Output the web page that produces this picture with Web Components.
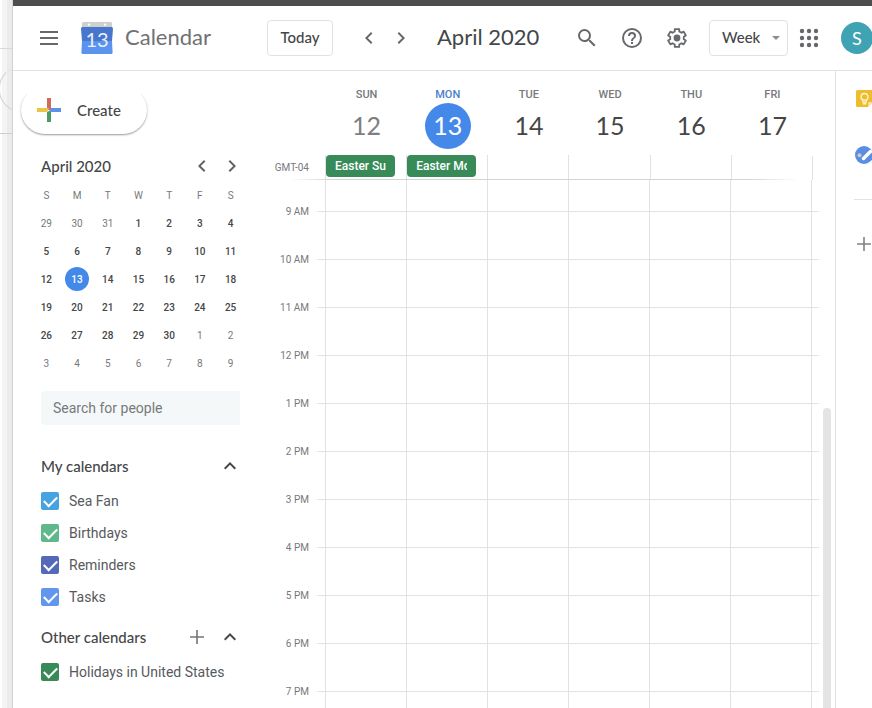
<!DOCTYPE html>
<html lang="en">
<head>
<meta charset="utf-8">
<title>Calendar</title>
<style>
html,body{margin:0;height:100%}
body{overflow:hidden;background:#fff;color:#444648;font-family:Roboto,"Liberation Sans",sans-serif;--display:Lato,"Open Sans",sans-serif;--line:#e2e2e2;--blue:#4489ea}
</style>
</head>
<body>
<calendar-app></calendar-app>
<script>
const base = `
*{box-sizing:border-box}
button{font:inherit;color:inherit;background:none;border:0;padding:0;margin:0;cursor:pointer;display:inline-flex;align-items:center;justify-content:center}
svg{display:block;flex:none}
h1,h2,ul{margin:0;padding:0;font-weight:inherit;font-size:inherit;list-style:none}`;
function define(name, css, html) {
  customElements.define(name, class extends HTMLElement {
    constructor() {
      super();
      this.attachShadow({mode: 'open'}).innerHTML =
        `<style>${base}${css}</style>` + (typeof html === 'function' ? html(this) : html);
    }
  });
}

const gearPoints = [0, 60, 120, 180, 240, 300].flatMap(a => [[-19, 6.9], [-14, 9.2], [14, 9.2], [19, 6.9]].map(([d, r]) => {
  const t = (a + d) * Math.PI / 180;
  return `${(12 + r * Math.sin(t)).toFixed(2)},${(12 - r * Math.cos(t)).toFixed(2)}`;
})).join(' ');
const icons = {
  menu: '<path d="M3 5h18v2H3zM3 11h18v2H3zM3 17h18v2H3z"/>',
  left: '<path d="M15.4 7.4 14 6l-6 6 6 6 1.4-1.4L10.800 12z"/>',
  right: '<path d="M10 6 8.600 7.400 13.200 12l-4.600 4.600L10 18l6-6z"/>',
  up: '<path d="m12 8-6 6 1.400 1.400 4.600-4.600 4.600 4.600L18 14z"/>',
  plus: '<path d="M19 12.800h-6.200V19h-1.600v-6.200H5v-1.600h6.200V5h1.600v6.200H19z"/>',
  search: '<path d="M15.500 14h-.790l-.280-.270A6.470 6.470 0 0 0 16 9.500 6.500 6.500 0 1 0 9.500 16c1.610 0 3.090-.590 4.230-1.570l.270.280v.790l5 4.990L20.490 19l-4.990-5zm-6 0a4.500 4.500 0 1 1 0-9 4.500 4.500 0 0 1 0 9z"/>',
  help: '<path d="M11 18h2v-2h-2v2zm1-16a10 10 0 1 0 0 20 10 10 0 0 0 0-20zm0 18a8 8 0 1 1 0-16 8 8 0 0 1 0 16zm0-14a4 4 0 0 0-4 4h2a2 2 0 1 1 4 0c0 2-3 1.750-3 5h2c0-2.250 3-2.500 3-5a4 4 0 0 0-4-4z"/>',
  gear: `<polygon fill="none" stroke="currentColor" stroke-width="1.800" stroke-linejoin="round" points="${gearPoints}"/><circle cx="12" cy="12" r="3.400"/>`,
  apps: [5, 12, 19].map(y => [5, 12, 19].map(x => `<circle cx="${x}" cy="${y}" r="2.200"/>`).join('')).join(''),
  create: '<path fill="#d3695c" d="M10 0h4v12h-4z"/><path fill="#ecc344" d="M0 10h12l-2 4H0z"/><path fill="#4a9d62" d="M10 14l4-2v12h-4z"/><path fill="#5b91e8" d="M14 10h10v4H12z"/>',
  keep: '<path fill="#efbd2c" d="M1.500 0H16v11l-5 5H1.500A1.500 1.500 0 0 1 0 14.500v-13A1.500 1.500 0 0 1 1.500 0z"/><path fill="#fae8a8" d="M11.500 16v-4.500H16z"/><circle cx="8" cy="6.500" r="3.200" fill="none" stroke="#fff3cd" stroke-width="1.300"/><path stroke="#fff3cd" stroke-width="1.300" d="M6.500 9.500v2.200h3V9.500M6.500 13h3" fill="none"/>',
  tasks: '<circle cx="9" cy="9" r="9" fill="#5a8ee2"/><circle cx="4.500" cy="9.200" r="2" fill="#cfc8bb"/><path d="m8.500 12.500 7-7" stroke="#fff" stroke-width="3.400" stroke-linecap="round"/>'
};
customElements.define('ui-icon', class extends HTMLElement {
  constructor() {
    super();
    const s = this.getAttribute('size') || 24, b = this.getAttribute('box') || 24;
    this.attachShadow({mode: 'open'}).innerHTML = `<style>:host{display:block;flex:none}svg{display:block}</style>
      <svg width="${s}" height="${s}" viewBox="0 0 ${b} ${b}" fill="currentColor" aria-hidden="true">${icons[this.getAttribute('name')]}</svg>`;
  }
});

define('calendar-logo', ':host{display:block;flex:none}text{font:20px var(--display)}', `
<svg width="32" height="33" viewBox="0 0 32 33" role="img" aria-label="Calendar logo">
  <path fill="#cfcfcf" d="M2.500 0h27A1.500 1.500 0 0 1 31 1.500V7H1V1.500A1.500 1.500 0 0 1 2.500 0z"/>
  <circle cx="8" cy="2.600" r="1.200" fill="#fff"/><circle cx="24" cy="2.600" r="1.200" fill="#fff"/>
  <path fill="#4876cc" d="M1.500 5h29A1.500 1.500 0 0 1 32 6.500L31 19H1L0 6.500A1.500 1.500 0 0 1 1.500 5z"/>
  <path fill="#5c93ee" d="M1 19h30l.600 11.500A1.500 1.500 0 0 1 30 32H2A1.500 1.500 0 0 1 .400 30.500z"/>
  <text x="16" y="25" text-anchor="middle" fill="#e8f1ff">13</text>
</svg>`);

define('top-bar', `
:host{display:flex;align-items:center;height:65px;border-bottom:1px solid var(--line);color:#66686b;flex:none}
.brand{display:flex;align-items:center;flex:0 0 254px;padding-left:24px}
.brand calendar-logo{margin-left:20px}
h1,h2{font:22px/28px var(--display);padding-bottom:2px;white-space:nowrap}
h1{margin-left:12px;color:#6f7173}
.today,select{height:36px;border:1px solid #dfe1e4;border-radius:4px;font:500 15px/20px var(--display);color:#444648;background:#fff}
.today{width:66px;flex:none;padding-bottom:2px}
nav{display:flex;margin-left:20px}
nav button{width:32px;height:32px}
h2{color:#444648;margin-left:20px}
.tools{display:flex;align-items:center;gap:20px;margin-left:auto;margin-right:-1px}
.icons{display:flex;gap:21px}
.view{display:flex;align-items:center;gap:9px}
.pick{display:grid;align-items:center}
.pick>*{grid-area:1/1}
select{appearance:none;width:79px;margin:0;padding:0 12px 2px}
.pick i{justify-self:end;margin-right:8px;border:4px solid transparent;border-top-color:#8b8d90;border-bottom:0;pointer-events:none}
.me{width:32px;height:32px;border-radius:50%;background:#3fa3b3;color:#fff;font:18px/32px var(--display)}
`, `
<div class="brand"><button aria-label="Main menu"><ui-icon name="menu"></ui-icon></button><calendar-logo></calendar-logo><h1>Calendar</h1></div>
<button class="today">Today</button>
<nav><button aria-label="Previous week"><ui-icon name="left"></ui-icon></button><button aria-label="Next week"><ui-icon name="right"></ui-icon></button></nav>
<h2>April 2020</h2>
<div class="tools">
  <div class="icons"><button aria-label="Search"><ui-icon name="search"></ui-icon></button><button aria-label="Help"><ui-icon name="help"></ui-icon></button><button aria-label="Settings"><ui-icon name="gear"></ui-icon></button></div>
  <div class="view"><div class="pick"><select aria-label="View"><option>Week</option></select><i></i></div><button aria-label="Apps"><ui-icon name="apps"></ui-icon></button></div>
  <button class="me" aria-label="Account">S</button>
</div>`);

define('create-button', `
:host{display:block;width:126px}
button{width:100%;height:48px;border-radius:24px;background:#fff;box-shadow:0 1px 2px #0006;justify-content:flex-start;padding-left:16px;gap:16px;font:500 15px/20px var(--display);clip-path:inset(8px -4px -4px -4px)}
`, '<button><ui-icon name="create"></ui-icon><slot></slot></button>');

const days = [29, 30, 31, ...Array.from({length: 30}, (_, i) => i + 1), ...Array.from({length: 9}, (_, i) => i + 1)];
define('mini-calendar', `
:host{display:block}
header{display:flex;align-items:center;height:24px;padding:0 21px 0 20px;font:500 15px/20px var(--display)}
header h2{flex:1}
header div{display:flex;gap:6px;color:#5f6368}
table{table-layout:fixed;border-collapse:collapse;width:215px;margin:3px 0 0 10px;font-size:10px;text-align:center}
th,td{height:28px;padding:0;font-weight:500}
th{font-weight:400;color:#77797c}
.out{color:#77797c;font-weight:400}
td button{width:24px;height:24px;border-radius:50%;vertical-align:middle}
.now{background:var(--blue);color:#fff}
`, `<header><h2>April 2020</h2><div><button aria-label="Previous month"><ui-icon name="left"></ui-icon></button><button aria-label="Next month"><ui-icon name="right"></ui-icon></button></div></header>
<table><thead><tr>${[...'SMTWTFS'].map(d => `<th>${d}</th>`).join('')}</tr></thead><tbody>${
  [0, 1, 2, 3, 4, 5].map(r => '<tr>' + days.slice(r * 7, r * 7 + 7).map((d, c) => {
    const i = r * 7 + c;
    return `<td class="${i < 3 || i > 32 ? 'out' : ''}"><button class="${i === 15 ? 'now' : ''}">${d}</button></td>`;
  }).join('') + '</tr>').join('')}</tbody></table>`);

define('people-search', `
:host{display:block}
input{display:block;width:100%;height:34px;border:0;border-radius:4px 0 0 4px;background:#f4f8f9;padding:0 12px;font:14px/20px Roboto,sans-serif;color:#3c4043}
input::placeholder{color:#77797c;opacity:1}
`, '<input type="search" placeholder="Search for people" aria-label="Search for people">');

define('calendar-group', `
:host{display:block}
header{display:flex;align-items:center;gap:9px;height:38px;padding-right:5px;font:500 15px/20px var(--display)}
h2{flex:1}
.add{color:#70757a}
`, el => `<header><h2>${el.getAttribute('heading')}</h2>${el.hasAttribute('addable') ? '<button class="add" aria-label="Add calendars"><ui-icon name="plus"></ui-icon></button>' : ''}<button aria-label="Collapse"><ui-icon name="up"></ui-icon></button></header><slot></slot>`);

define('calendar-check', `
:host{display:block}
label{display:flex;align-items:center;gap:10px;height:32px;font-size:14px;line-height:20px;color:#58595c;white-space:nowrap}
input{appearance:none;width:18px;height:18px;margin:0;border-radius:2px;display:grid;place-items:center;background:var(--tint);flex:none}
input:checked::before{content:"";width:11px;height:6px;border:solid #fff;border-width:0 0 2px 2px;transform:translateY(-1px) rotate(-45deg)}
`, '<label><input type="checkbox" checked><slot></slot></label>');

define('side-bar', `
:host{display:flex;flex-direction:column;flex:0 0 252px;padding:15px 0 0 8px}
mini-calendar{margin-top:20px}
people-search{margin:14px 25px 0 20px}
calendar-group{margin:22px 18px 0 20px}
calendar-group+calendar-group{margin-top:5px}
`, `<create-button>Create</create-button><mini-calendar></mini-calendar><people-search></people-search>
<calendar-group heading="My calendars">
<calendar-check style="--tint:#46a3df">Sea Fan</calendar-check><calendar-check style="--tint:#5fb78c">Birthdays</calendar-check><calendar-check style="--tint:#5469b8">Reminders</calendar-check><calendar-check style="--tint:#6196ec">Tasks</calendar-check></calendar-group>
<calendar-group heading="Other calendars" addable><calendar-check style="--tint:#388b58">Holidays in United States</calendar-check></calendar-group>`);

define('day-column', `
:host{display:flex;flex-direction:column;align-items:center;min-width:0;padding-left:2px;color:#444648}
small{font:500 11px/14px Roboto,sans-serif;color:#77797c;margin-top:17px}
b{font:25px/45px var(--display);width:46px;height:46px;text-align:center;border-radius:50%;margin-top:1px}
:host([past]) b{color:#7d7f82}
:host([today]) small{color:#4a7fca}
:host([today]) b{background:var(--blue);color:#fff}
.all{align-self:stretch;height:25px;margin:6px 0 0 -2px;border-left:1px solid var(--line)}
`, el => `<small>${el.getAttribute('day')}</small><b>${el.getAttribute('date')}</b><div class="all"><slot></slot></div>`);

define('event-chip', `
:host{display:block;margin-right:11px}
button{display:block;width:100%;height:22px;border-radius:4px;background:#388b58;color:#fff;font:500 12px/22px Roboto,sans-serif;padding:0 9px;text-align:left}
span{display:block;overflow:hidden;white-space:nowrap}
`, '<button><span><slot></slot></span></button>');

const names = ['SUN', 'MON', 'TUE', 'WED', 'THU', 'FRI'];
define('week-view', `
:host{display:flex;flex-direction:column;flex:1;min-width:0;min-height:0}
.head{display:grid;grid-template-columns:60px 1fr;padding-right:22px;height:108px;flex:none}
.zone{align-self:end;text-align:right;font-size:10px;line-height:14px;color:#77797c;padding:0 16px 5px 0}
.cols{display:grid;grid-template-columns:repeat(6,1fr)}
.head .cols{border-right:1px solid transparent;border-image:linear-gradient(transparent 84px,#e2e2e2 84px) 1}
.rule{height:1px;flex:none;margin:0 35px 0 25px;background:linear-gradient(90deg,transparent,#d4d4d4 8%,#d4d4d4 90%,transparent)}
.body{display:grid;grid-template-columns:60px 1fr 23px;grid-template-rows:minmax(0,1fr);flex:1;min-height:0;overflow:hidden}
.body .cols{grid-area:1/2;border-right:1px solid var(--line)}
.body .cols i{border-left:1px solid var(--line)}
.hours{grid-area:1/1/2/4;padding:7px 16px 0 0}
.hours li{display:flex;align-items:center;gap:8px;height:48px;padding-top:1px;font-size:10px;line-height:15px;color:#77797c}
.hours span{width:44px;text-align:right}
.hours li::after{content:"";flex:1;height:1px;background:var(--line)}
.bar{grid-area:1/3;justify-self:end;width:8px;margin:228px 4px 0 0;border-radius:4px 4px 0 0;background:#e4e4e4}
`, `<div class="head"><div class="zone">GMT-04</div><div class="cols">${names.map((n, i) =>
  `<day-column day="${n}" date="${12 + i}" ${['past', 'today'][i] || ''}>${i < 2 ? `<event-chip>${['Easter Sunday', 'Easter Monday'][i]}</event-chip>` : ''}</day-column>`).join('')}</div></div>
<div class="rule"></div>
<div class="body"><div class="cols">${'<i></i>'.repeat(6)}</div><ul class="hours">${
  ['9 AM', '10 AM', '11 AM', '12 PM', '1 PM', '2 PM', '3 PM', '4 PM', '5 PM', '6 PM', '7 PM'].map(h => `<li><span>${h}</span></li>`).join('')}</ul><div class="bar"></div></div>`);

define('side-panel', `
:host{display:flex;flex-direction:column;flex:0 0 37px;border-left:1px solid var(--line);overflow:hidden;align-items:flex-start;padding:19px 0 0 20px;color:#808285}
button:nth-of-type(2){margin:39px 0 0 -1px}
hr{width:20px;height:1px;border:0;background:var(--line);margin:35px 0 0 -2px}
hr+button{margin:32px 0 0 -4px}
`, `<button aria-label="Keep"><ui-icon name="keep" size="17" box="16"></ui-icon></button><button aria-label="Tasks"><ui-icon name="tasks" size="18" box="18"></ui-icon></button><hr><button aria-label="Get add-ons"><ui-icon name="plus"></ui-icon></button>`);

define('back-window', `
:host{display:flex;flex-direction:column;flex:0 0 13px;border-right:1px solid #d2d2d2;background:linear-gradient(90deg,#fff 2px,#f4f4f4 2px 7px,#ebebeb 7px);overflow:hidden}
.top{height:49px;border-bottom:1px solid #d9d9d9}
.mid{height:85px;border-bottom:1px solid #cfcfcf;padding-top:17px}
.pill{width:44px;height:46px;margin-left:-1px;border-radius:23px;border:1px solid #d3d3d3;border-top-color:#e6e6e6}
`, '<div class="top"></div><div class="mid"><div class="pill"></div></div>');

define('calendar-app', `
:host{display:flex;height:100vh;overflow:hidden}
.window{display:flex;flex-direction:column;flex:1;min-width:0;border-top:6px solid #504d50}
main{display:flex;flex:1;min-height:0}
`, `<back-window></back-window><div class="window"><top-bar></top-bar><main><side-bar></side-bar><week-view></week-view><side-panel></side-panel></main></div>`);
</script>
</body>
</html>
